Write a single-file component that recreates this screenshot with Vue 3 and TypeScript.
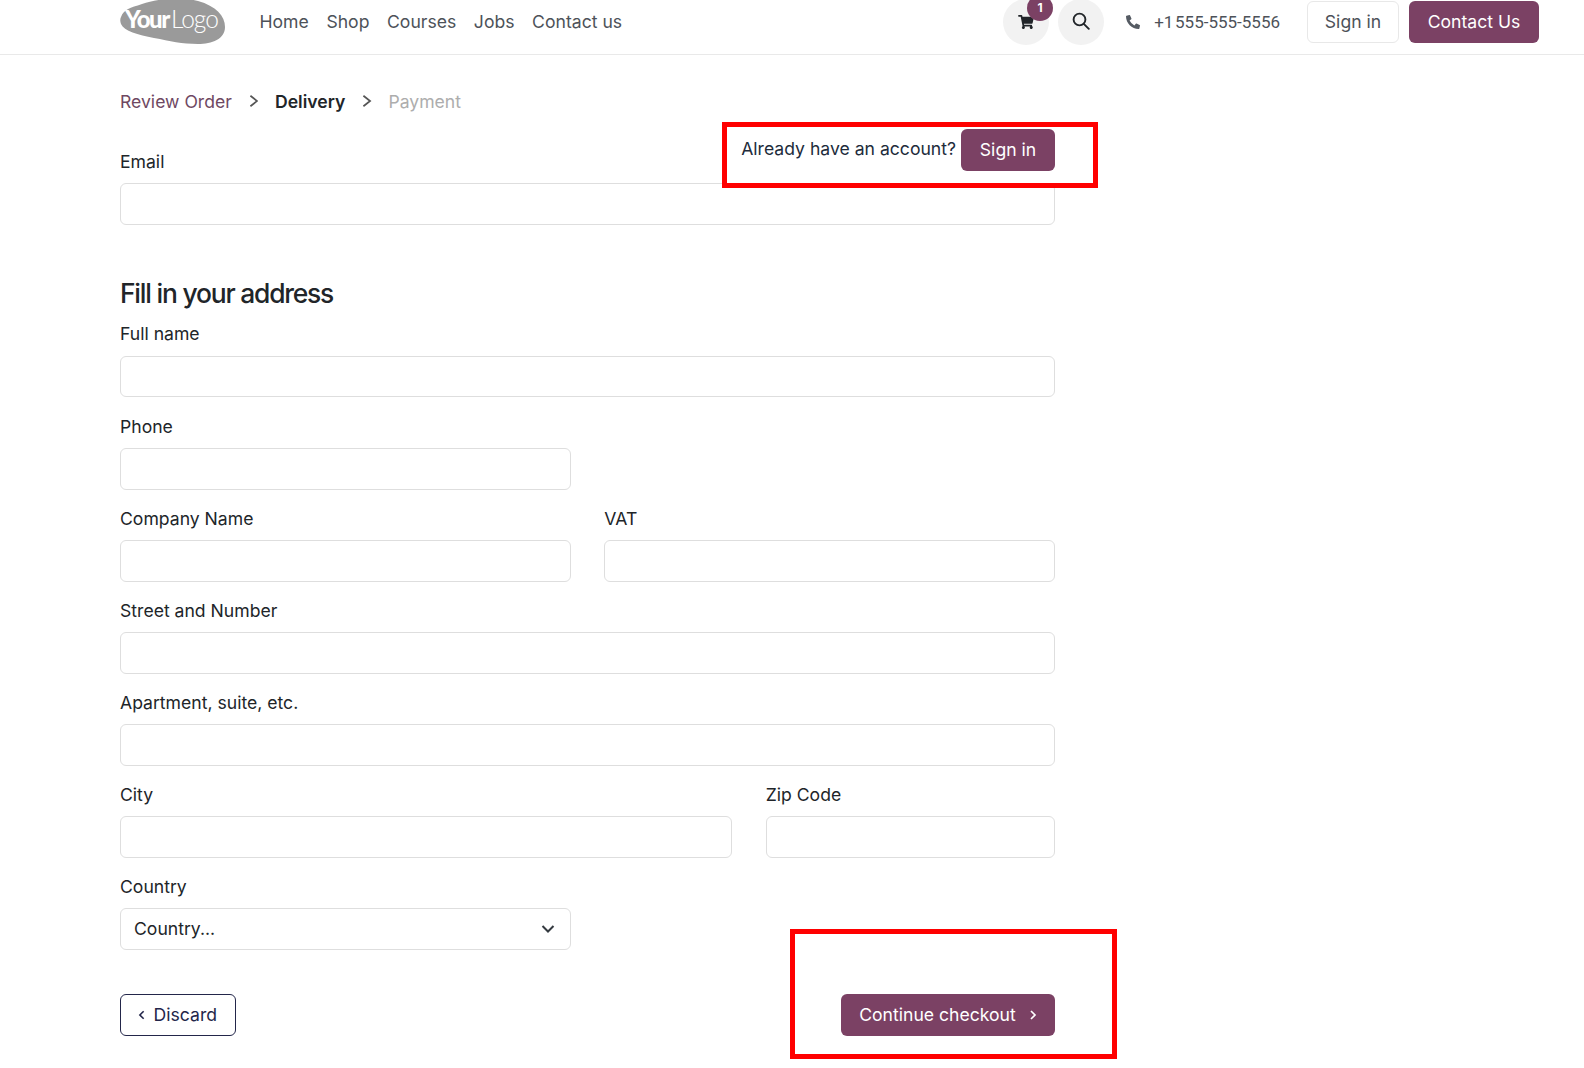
<script setup lang="ts">
const nav: string[] = ['Home', 'Shop', 'Courses', 'Jobs', 'Contact us']
interface Field { label: string; span: number }
const fields: Field[] = [
  { label: 'Full name', span: 12 },
  { label: 'Phone', span: 6 },
  { label: '', span: 6 },
  { label: 'Company Name', span: 6 },
  { label: 'VAT', span: 6 },
  { label: 'Street and Number', span: 12 },
  { label: 'Apartment, suite, etc.', span: 12 },
  { label: 'City', span: 8 },
  { label: 'Zip Code', span: 4 }
]
</script>

<template>
  <div class="page">
    <header class="header">
      <svg class="logo" viewBox="0 0 105 46" width="105" height="46">
        <path d="M1 18C4 10 10 9 22 5C38 0 58-3 78 2C96 7 105 17 105 28C105 40 92 45 78 45C62 45 50 42 34 39C18 36 4 32 1 25C0 22 0 20 1 18Z" fill="#9a9a9a" />
        <text x="5" y="29" class="logo-your">Your</text>
        <text x="51" y="29" class="logo-logo">Logo</text>
      </svg>
      <nav class="nav">
        <a v-for="n in nav" :key="n">{{ n }}</a>
      </nav>
      <div class="actions">
        <div class="circle cart">
          <svg viewBox="0 0 576 512" width="16" height="14"><path fill="#212529" d="M528.12 301.319l47.273-208C578.806 78.301 567.391 64 551.99 64H159.208l-9.166-44.81C147.758 8.021 137.93 0 126.529 0H24C10.745 0 0 10.745 0 24v16c0 13.255 10.745 24 24 24h69.883l70.248 343.435C147.325 417.1 136 435.222 136 456c0 30.928 25.072 56 56 56s56-25.072 56-56c0-15.674-6.447-29.835-16.824-40h209.647C430.447 426.165 424 440.326 424 456c0 30.928 25.072 56 56 56s56-25.072 56-56c0-22.172-12.888-41.332-31.579-50.405l5.517-24.276c3.413-15.018-8.002-29.319-23.403-29.319H218.117l-6.545-32h293.145c11.206 0 20.92-7.754 23.403-18.681z" /></svg>
          <span class="badge">1</span>
        </div>
        <div class="circle search">
          <svg class="search-icon" viewBox="0 0 18 18" width="18" height="18" fill="none" stroke="#212529" stroke-width="1.9"><circle cx="7.5" cy="7.5" r="5.9" /><path d="M11.8 11.8L16.8 16.8" stroke-linecap="round" /></svg>
        </div>
        <div class="phone">
          <svg viewBox="0 0 512 512" width="14" height="14"><path fill="#555b63" d="M497.39 361.8l-112-48a24 24 0 0 0-28 6.9l-49.6 60.6A370.66 370.66 0 0 1 130.6 204.11l60.6-49.6a23.94 23.94 0 0 0 6.9-28l-48-112A24.16 24.16 0 0 0 122.6.61l-104 24A24 24 0 0 0 0 48c0 256.5 207.9 464 464 464a24 24 0 0 0 23.4-18.6l24-104a24.29 24.29 0 0 0-14.01-27.6z" /></svg>
          <span class="phone-no">+1 555-555-5556</span>
        </div>
        <button class="btn ghost">Sign in</button>
        <button class="btn primary">Contact Us</button>
      </div>
    </header>

    <main class="main">
      <div class="crumbs">
        <span class="crumb-link">Review Order</span>
        <svg class="chev" viewBox="0 0 10 14" width="9.5" height="14"><path d="M1.5 1.5l7 5.5-7 5.5" fill="none" stroke="#555" stroke-width="1.8" /></svg>
        <span class="crumb-on">Delivery</span>
        <svg class="chev" viewBox="0 0 10 14" width="9.5" height="14"><path d="M1.5 1.5l7 5.5-7 5.5" fill="none" stroke="#555" stroke-width="1.8" /></svg>
        <span class="crumb-off">Payment</span>
      </div>

      <div class="email">
        <div class="signin">
          <span>Already have an account?</span>
          <button class="btn primary small">Sign in</button>
        </div>
        <label class="label">Email</label>
        <div class="input"></div>
      </div>

      <h2 class="title">Fill in your address</h2>

      <div class="grid">
        <template v-for="(f, i) in fields" :key="i">
          <div v-if="f.label" class="field" :class="'s' + f.span">
            <label class="label">{{ f.label }}</label>
            <div class="input"></div>
          </div>
          <div v-else class="s6"></div>
        </template>
        <div class="field s6">
          <label class="label">Country</label>
          <div class="input select">
            <span>Country...</span>
            <svg viewBox="0 0 14 10" width="14" height="10"><path d="M1.5 2l5.5 5.5L12.5 2" fill="none" stroke="#343a40" stroke-width="2" /></svg>
          </div>
        </div>
      </div>

      <div class="foot">
        <button class="btn outline">
          <svg viewBox="0 0 8 12" width="8" height="12"><path d="M6 2L2 6l4 4" fill="none" stroke="#23264a" stroke-width="1.7" /></svg>
          Discard
        </button>
        <button class="btn primary cont">
          <span>Continue checkout</span>
          <svg viewBox="0 0 8 12" width="8" height="12"><path d="M2 2l4 4-4 4" fill="none" stroke="#fff" stroke-width="1.7" /></svg>
        </button>
      </div>
    </main>

    <div class="mark mark-a"></div>
    <div class="mark mark-b"></div>
  </div>
</template>

<style>
html, body { margin: 0; background: #fff; overflow: hidden; }
</style>

<style scoped>
.page {
  position: relative;
  height: 1068px;
  overflow: hidden;
  font-family: Inter, "Liberation Sans", sans-serif;
  font-size: 17.6px;
  color: #212529;
  background: #fff;
}
.header {
  box-sizing: border-box;
  height: 55px;
  padding: 0 45px 11px 120px;
  display: flex;
  align-items: center;
  border-bottom: 1px solid #e9e9e9;
}
.logo { flex: none; margin-right: 34.5px; }
.logo-your { font-family: Lato, sans-serif; font-weight: 900; font-size: 24px; fill: #fff; letter-spacing: -1.4px; }
.logo-logo { font-family: Lato, sans-serif; font-weight: 300; font-size: 24.5px; fill: #fff; letter-spacing: -1px; }
.nav { display: flex; gap: 17.6px; color: #4d5259; }
.actions { margin-left: auto; display: flex; align-items: center; }
.circle {
  position: relative;
  width: 46px;
  height: 46px;
  border-radius: 50%;
  background: #f2f2f2;
  display: flex;
  align-items: center;
  justify-content: center;
}
.cart { margin-right: 9px; }
.search-icon { margin-top: -2px; }
.badge {
  position: absolute;
  top: -4px;
  right: -4px;
  width: 26px;
  height: 26px;
  border-radius: 50%;
  background: #7b4164;
  color: #fff;
  font-size: 12px;
  font-weight: 700;
  display: flex;
  align-items: center;
  justify-content: center;
}
.phone {
  display: flex;
  align-items: center;
  gap: 14px;
  margin: 0 27px 0 22px;
  color: #4d5259;
}
.phone-no { font-family: Roboto, sans-serif; font-size: 17px; word-spacing: -2.5px; }
.btn {
  box-sizing: border-box;
  height: 42px;
  border-radius: 6px;
  border: 1px solid transparent;
  font: inherit;
  padding: 0 18px;
  display: inline-flex;
  align-items: center;
  justify-content: center;
  white-space: nowrap;
}
.ghost { background: #fff; border-color: #e8e8e8; color: #4d5259; margin-right: 10px; width: 92px; }
.primary { background: #7b4164; color: #fff; }
.actions .primary { width: 130px; }
.main { width: 935px; margin-left: 120px; }
.crumbs {
  margin-top: 34px;
  height: 24px;
  display: flex;
  align-items: center;
  gap: 16.8px;
}
.crumb-link { color: #6f4862; }
.crumb-on { font-weight: 600; color: #212529; }
.crumb-off { color: #adadad; }
.email { position: relative; margin-top: 37px; }
.signin {
  position: absolute;
  top: -21.5px;
  right: 0;
  display: flex;
  align-items: center;
  gap: 5px;
  color: #212b3b;
}
.signin span { margin-top: -2px; }
.small { width: 94px; padding: 0; }
.label { display: block; height: 24px; line-height: 24px; margin-bottom: 9px; color: #212529; }
.input {
  box-sizing: border-box;
  height: 41.6px;
  border: 1px solid #dedede;
  border-radius: 6px;
  background: #fff;
}
.title {
  margin: 48px 0 0;
  height: 40px;
  line-height: 40px;
  font-size: 26.4px;
  font-weight: 500;
  letter-spacing: -1.2px;
  color: #212529;
}
.grid {
  margin-top: 9px;
  display: grid;
  grid-template-columns: repeat(12, 1fr);
  column-gap: 33.6px;
  row-gap: 17.3px;
}
.grid > .field:first-child { margin-bottom: 1px; }
.grid > .field:first-child .label { margin-bottom: 10px; }
.s12 { grid-column: span 12; }
.s8 { grid-column: span 8; }
.s6 { grid-column: span 6; }
.s4 { grid-column: span 4; }
.select {
  display: flex;
  align-items: center;
  justify-content: space-between;
  padding: 0 15px 0 13px;
}
.foot {
  margin-top: 44px;
  display: flex;
  justify-content: space-between;
}
.outline { background: #fff; border-color: #23264a; color: #23264a; gap: 8px; padding: 0 18px 0 17px; width: 116px; }
.cont { gap: 13px; width: 214px; padding: 0; }
.mark {
  position: absolute;
  box-sizing: border-box;
  border: 5px solid #ff0000;
  pointer-events: none;
}
.mark-a { left: 721.5px; top: 122px; width: 376.5px; height: 66px; }
.mark-b { left: 790px; top: 929px; width: 327px; height: 130px; }
</style>
